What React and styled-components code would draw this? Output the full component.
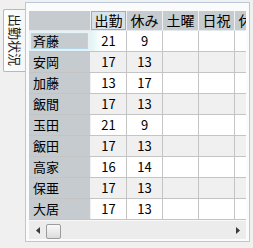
import React from "react";
import styled, { createGlobalStyle } from "styled-components";

const GlobalStyle = createGlobalStyle`
  body {
    margin: 0;
    background: #f0f0f0;
    font-family: "Noto Sans CJK JP", "Noto Sans", sans-serif;
  }
`;

const Window = styled.div`
  width: 253px;
  height: 248px;
  display: flex;
  align-items: flex-start;
`;

const TabStrip = styled.div`
  width: 22px;
  padding: 9px 0 0 3px;
  position: relative;
  z-index: 1;
`;

const Tab = styled.div`
  width: 22px;
  height: 63px;
  box-sizing: border-box;
  border: 1px solid #a9bbd0;
  border-right: none;
  border-radius: 2px 0 0 2px;
  background: linear-gradient(to right, #ffffff, #f4f6f8);
  writing-mode: vertical-rl;
  text-orientation: sideways;
  display: flex;
  align-items: center;
  justify-content: center;
  font-size: 13px;
  color: #1a1a1a;
  line-height: 20px;
  margin-right: -1px;
`;

const Page = styled.div`
  margin-top: 2px;
  width: 225px;
  height: 240px;
  box-sizing: border-box;
  border: 1px solid #b9c8da;
  background: #fbfbfb;
  padding: 8px 3px 3px 3px;
`;

const Grid = styled.div`
  width: 217px;
  overflow: hidden;
  background: #ffffff;
`;

const Row = styled.div`
  display: flex;
  height: ${(p) => (p.header ? "19px" : "20px")};
  border-bottom: 1px solid ${(p) => (p.header ? "#e6e9eb" : "#c4c4c4")};
  background: ${(p) => (p.alt ? "#f0f0f0" : "#ffffff")};
`;

const RowHead = styled.div`
  flex: 0 0 62px;
  box-sizing: border-box;
  border-right: 1px solid #eef0f1;
  background: #c5cbce;
  font-size: 13px;
  line-height: 20px;
  padding-left: 4px;
  color: #000;
  box-shadow: ${(p) => (p.current ? "inset 0 0 0 2px #e4f3f8, inset 0 0 0 3px #b4d6e6" : "none")};
`;

const ColHead = styled.div`
  flex: 0 0 36px;
  box-sizing: border-box;
  border-right: 1px solid #eef0f1;
  background: ${(p) => (p.current ? "#d8e3e9" : "#c5cbce")};
  box-shadow: ${(p) => (p.current ? "inset 0 0 0 1px #82b6d2" : "none")};
  font-size: 14px;
  line-height: 19px;
  text-align: center;
  white-space: nowrap;
  overflow: hidden;
  color: #000;
`;

const Cell = styled.div`
  flex: 0 0 36px;
  box-sizing: border-box;
  border-right: 1px solid #c4c4c4;
  font-size: 13px;
  line-height: 20px;
  text-align: center;
  color: #000;
  background: ${(p) => (p.current ? "linear-gradient(to right, #dff5f5, #ffffff 30%)" : "transparent")};
`;

const HScroll = styled.div`
  height: 18px;
  display: flex;
  align-items: center;
  background: #ececec;
  border-top: 1px solid #f8f8f8;
`;

const Arrow = styled.div`
  width: 17px;
  display: flex;
  justify-content: center;
  svg {
    display: block;
  }
`;

const Thumb = styled.div`
  width: 15px;
  height: 15px;
  box-sizing: border-box;
  border: 1px solid #9c9c9c;
  border-radius: 2px;
  background: linear-gradient(to bottom, #fafafa, #dcdcdc);
  margin-top: 3px;
`;

const Track = styled.div`
  flex: 1;
`;

const columns = ["出勤", "休み", "土曜", "日祝", "休出"];

const rows = [
  ["斉藤", 21, 9],
  ["安岡", 17, 13],
  ["加藤", 13, 17],
  ["飯間", 17, 13],
  ["玉田", 21, 9],
  ["飯田", 17, 13],
  ["高家", 16, 14],
  ["保亜", 17, 13],
  ["大居", 17, 13],
];

function App() {
  return (
    <>
      <GlobalStyle />
      <Window>
        <TabStrip>
          <Tab>出勤状況</Tab>
        </TabStrip>
        <Page>
          <Grid>
            <Row header>
              <RowHead />
              {columns.map((c, i) => (
                <ColHead key={c} current={i === 0}>
                  {c}
                </ColHead>
              ))}
            </Row>
            {rows.map((r, ri) => (
              <Row key={r[0]} alt={ri % 2 === 1}>
                <RowHead current={ri === 0}>{r[0]}</RowHead>
                <Cell current={ri === 0}>{r[1]}</Cell>
                <Cell>{r[2]}</Cell>
                <Cell />
                <Cell />
                <Cell />
              </Row>
            ))}
            <HScroll>
              <Arrow>
                <svg width="4" height="7" viewBox="0 0 4 7">
                  <path d="M4 0 L0 3.5 L4 7 Z" fill="#3a3a3a" />
                </svg>
              </Arrow>
              <Thumb />
              <Track />
              <Arrow>
                <svg width="4" height="7" viewBox="0 0 4 7">
                  <path d="M0 0 L4 3.5 L0 7 Z" fill="#3a3a3a" />
                </svg>
              </Arrow>
            </HScroll>
          </Grid>
        </Page>
      </Window>
    </>
  );
}

export default App;
